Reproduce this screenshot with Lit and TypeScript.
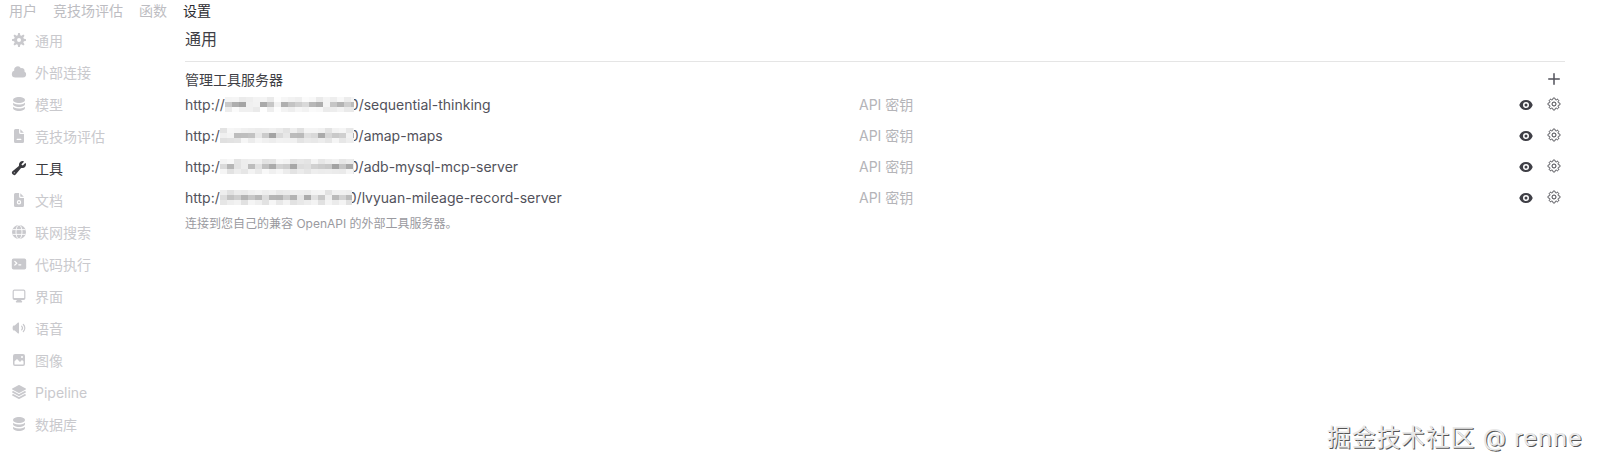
import { LitElement, html, css, svg } from "lit";
import { customElement } from "lit/decorators.js";

const db = svg`<path d="M8 7c3.314 0 6-1.343 6-3s-2.686-3-6-3-6 1.343-6 3 2.686 3 6 3Z"/><path d="M8 8.5c1.84 0 3.579-.37 4.914-1.037A6.33 6.33 0 0 0 14 6.78V8c0 1.657-2.686 3-6 3S2 9.657 2 8V6.78c.346.273.72.5 1.087.683C4.42 8.131 6.16 8.5 8 8.5Z"/><path d="M8 12.5c1.84 0 3.579-.37 4.914-1.037.366-.183.74-.41 1.086-.684V12c0 1.657-2.686 3-6 3s-6-1.343-6-3v-1.22c.346.273.72.5 1.087.683C4.42 12.131 6.16 12.5 8 12.5Z"/>`;

const icons: Record<string, { box: number; body: unknown }> = {
  gear: { box: 16, body: svg`<path fill-rule="evenodd" d="M6.955 1.45A.5.5 0 0 1 7.452 1h1.096a.5.5 0 0 1 .497.45l.17 1.699c.484.12.94.312 1.356.562l1.321-1.081a.5.5 0 0 1 .67.033l.774.775a.5.5 0 0 1 .034.67l-1.08 1.32c.25.417.44.873.561 1.357l1.699.17a.5.5 0 0 1 .45.497v1.096a.5.5 0 0 1-.45.497l-1.699.17c-.12.484-.312.94-.562 1.356l1.082 1.322a.5.5 0 0 1-.034.67l-.774.774a.5.5 0 0 1-.67.033l-1.322-1.08c-.416.25-.872.44-1.356.561l-.17 1.699a.5.5 0 0 1-.497.45H7.452a.5.5 0 0 1-.497-.45l-.17-1.699a4.973 4.973 0 0 1-1.356-.562L4.108 13.37a.5.5 0 0 1-.67-.033l-.774-.775a.5.5 0 0 1-.034-.67l1.08-1.32a4.971 4.971 0 0 1-.561-1.357l-1.699-.17A.5.5 0 0 1 1 8.548V7.452a.5.5 0 0 1 .45-.497l1.699-.17c.12-.484.312-.94.562-1.356L2.629 4.107a.5.5 0 0 1 .034-.67l.774-.774a.5.5 0 0 1 .67-.033L5.43 3.71a4.97 4.97 0 0 1 1.356-.561l.17-1.699ZM6 8a2 2 0 1 0 4 0 2 2 0 0 0-4 0Z"/>` },
  cloud: { box: 20, body: svg`<path d="M1 12.5A4.5 4.5 0 0 0 5.5 17H15a4 4 0 0 0 1.866-7.539 3.504 3.504 0 0 0-4.504-4.272A4.5 4.5 0 0 0 4.06 8.235 4.502 4.502 0 0 0 1 12.5Z"/>` },
  db: { box: 16, body: db },
  file: { box: 16, body: svg`<path fill-rule="evenodd" d="M3 2.5A1.5 1.5 0 0 1 4.5 1h3.6v3.4A1.6 1.6 0 0 0 9.7 6H13v7.5a1.5 1.5 0 0 1-1.5 1.5h-7A1.5 1.5 0 0 1 3 13.5v-11Zm3.2 8.3a.6.6 0 0 0 0 1.2h3.6a.6.6 0 0 0 0-1.2H6.2Z"/><path d="M9.3 1.2 12.8 4.8H9.8a.5.5 0 0 1-.5-.5V1.2Z"/>` },
  wrench: { box: 24, body: svg`<path fill-rule="evenodd" d="M12 6.75a5.25 5.25 0 0 1 6.775-5.025.75.75 0 0 1 .313 1.248l-3.32 3.319c.063.475.276.934.641 1.299.365.365.824.578 1.3.64l3.318-3.319a.75.75 0 0 1 1.248.313 5.25 5.25 0 0 1-5.472 6.756c-1.018-.086-1.87.1-2.309.634L7.344 21.3A3.298 3.298 0 1 1 2.7 16.657l8.684-7.151c.533-.44.72-1.291.634-2.309A5.342 5.342 0 0 1 12 6.75ZM4.117 19.125a.75.75 0 0 1 .75-.75h.008a.75.75 0 0 1 .75.75v.008a.75.75 0 0 1-.75.75h-.008a.75.75 0 0 1-.75-.75v-.008Z"/>` },
  doc: { box: 16, body: svg`<path fill-rule="evenodd" d="M3 2.5A1.5 1.5 0 0 1 4.5 1h3.6v3.4A1.6 1.6 0 0 0 9.7 6H13v7.5a1.5 1.5 0 0 1-1.5 1.5h-7A1.5 1.5 0 0 1 3 13.5v-11ZM8 8a2.2 2.2 0 1 0 0 4.4A2.2 2.2 0 0 0 8 8Zm0 1.2a1 1 0 1 1 0 2 1 1 0 0 1 0-2Z"/><path d="M9.3 1.2 12.8 4.8H9.8a.5.5 0 0 1-.5-.5V1.2Z"/>` },
  globe: { box: 16, body: svg`<circle cx="8" cy="8" r="7"/><g fill="none" stroke="#fff" stroke-width=".9"><ellipse cx="8" cy="8" rx="3" ry="7"/><path d="M1.5 5.6h13M1.5 10.4h13"/></g>` },
  term: { box: 20, body: svg`<path fill-rule="evenodd" d="M3.25 3A2.25 2.25 0 0 0 1 5.25v9.5A2.25 2.25 0 0 0 3.25 17h13.5A2.25 2.25 0 0 0 19 14.75v-9.5A2.25 2.25 0 0 0 16.75 3H3.25Zm.943 8.752a.75.75 0 0 1 .055-1.06L6.128 9l-1.88-1.693a.75.75 0 1 1 1.004-1.114l2.5 2.25a.75.75 0 0 1 0 1.114l-2.5 2.25a.75.75 0 0 1-1.06-.055ZM9.75 10.25a.75.75 0 0 0 0 1.5h2.5a.75.75 0 0 0 0-1.5h-2.5Z"/>` },
  desk: { box: 20, body: svg`<path fill-rule="evenodd" d="M2 4.25A2.25 2.25 0 0 1 4.25 2h11.5A2.25 2.25 0 0 1 18 4.25v8.5A2.25 2.25 0 0 1 15.75 15h-3.105a3.501 3.501 0 0 0 1.1 1.677A.75.75 0 0 1 13.26 18H6.74a.75.75 0 0 1-.484-1.323A3.501 3.501 0 0 0 7.355 15H4.25A2.25 2.25 0 0 1 2 12.75v-8.5Zm1.5 0a.75.75 0 0 1 .75-.75h11.5a.75.75 0 0 1 .75.75v7.5a.75.75 0 0 1-.75.75H4.25a.75.75 0 0 1-.75-.75v-7.5Z"/>` },
  sound: { box: 20, body: svg`<path d="M10 3.75a.75.75 0 0 0-1.264-.546L4.703 7H3.167a.75.75 0 0 0-.7.48A6.985 6.985 0 0 0 2 10c0 .887.165 1.737.468 2.52.111.29.39.48.7.48h1.535l4.033 3.796A.75.75 0 0 0 10 16.25V3.75ZM15.95 5.05a.75.75 0 0 0-1.06 1.061 5.5 5.5 0 0 1 0 7.778.75.75 0 0 0 1.06 1.06 7 7 0 0 0 0-9.899Z"/><path d="M13.829 7.172a.75.75 0 0 0-1.061 1.06 2.5 2.5 0 0 1 0 3.536.75.75 0 0 0 1.06 1.06 4 4 0 0 0 0-5.656Z"/>` },
  image: { box: 16, body: svg`<path fill-rule="evenodd" d="M2 4a2 2 0 0 1 2-2h8a2 2 0 0 1 2 2v8a2 2 0 0 1-2 2H4a2 2 0 0 1-2-2V4Zm10.5 5.707a.5.5 0 0 0-.146-.353l-1-1a.5.5 0 0 0-.708 0L9.354 9.646a.5.5 0 0 1-.708 0L6.354 7.354a.5.5 0 0 0-.708 0l-2 2a.5.5 0 0 0-.146.353V12a.5.5 0 0 0 .5.5h8a.5.5 0 0 0 .5-.5V9.707ZM12 5a1 1 0 1 1-2 0 1 1 0 0 1 2 0Z"/>` },
  layers: { box: 24, body: svg`<path d="M11.644 1.59a.75.75 0 0 1 .712 0l9.75 5.25a.75.75 0 0 1 0 1.32l-9.75 5.25a.75.75 0 0 1-.712 0l-9.75-5.25a.75.75 0 0 1 0-1.32l9.75-5.25Z"/><path d="m3.265 10.602 7.668 4.129a2.25 2.25 0 0 0 2.134 0l7.668-4.13 1.37.739a.75.75 0 0 1 0 1.32l-9.75 5.25a.75.75 0 0 1-.71 0l-9.75-5.25a.75.75 0 0 1 0-1.32l1.37-.738Z"/><path d="m10.933 19.231-7.668-4.13-1.37.739a.75.75 0 0 0 0 1.32l9.75 5.25c.221.12.489.12.71 0l9.75-5.25a.75.75 0 0 0 0-1.32l-1.37-.738-7.668 4.13a2.25 2.25 0 0 1-2.134-.001Z"/>` },
};

const nav = [
  ["gear", "通用"], ["cloud", "外部连接"], ["db", "模型"], ["file", "竞技场评估"],
  ["wrench", "工具"], ["doc", "文档"], ["globe", "联网搜索"], ["term", "代码执行"],
  ["desk", "界面"], ["sound", "语音"], ["image", "图像"], ["layers", "Pipeline"], ["db", "数据库"],
];

const servers = [
  { pre: "http://", path: "0/sequential-thinking", w: 129, seed: 7, halo: false },
  { pre: "http:/", path: "0/amap-maps", w: 134, seed: 23, halo: true },
  { pre: "http:/", path: "0/adb-mysql-mcp-server", w: 134, seed: 41, halo: true },
  { pre: "http:/", path: "0/lvyuan-mileage-record-server", w: 132, seed: 59, halo: true },
];

function mosaic(w: number, seed: number, halo: boolean) {
  const cw = 7;
  const ch = 5;
  const rows = 3;
  const cols = Math.ceil(w / cw);
  const cells = [];
  let s = seed;
  for (let r = 0; r < rows; r++) {
    for (let c = 0; c < cols; c++) {
      s = (s * 9301 + 49297) % 233280;
      const v = s / 233280;
      const grey = r === 1
        ? Math.round(160 + v * 85)
        : Math.round((halo ? 224 : 232) + v * 24);
      cells.push(svg`<rect x=${c * cw} y=${r * ch} width=${cw} height=${ch} fill="rgb(${grey},${grey},${grey})"/>`);
    }
  }
  return html`<svg class="mosaic" width=${w} height="15" viewBox="0 0 ${w} 15">${cells}</svg>`;
}

@customElement("nav-icon")
class NavIcon extends LitElement {
  static properties = { name: {} };
  name = "gear";
  static styles = css`
    :host { display: flex; width: 16px; height: 16px; }
    svg { width: 16px; height: 16px; fill: currentColor; }
  `;
  render() {
    const i = icons[this.name];
    return html`<svg viewBox="0 0 ${i.box} ${i.box}">${i.body}</svg>`;
  }
}

@customElement("app-root")
export class AppRoot extends LitElement {
  static styles = css`
    :host {
      display: block;
      position: relative;
      width: 1598px;
      height: 468px;
      overflow: hidden;
      background: #fff;
      font-family: Inter, "Noto Sans CJK SC", sans-serif;
      font-size: 14px;
      color: #3f3f46;
    }
    .tabs {
      display: flex;
      gap: 16px;
      height: 22px;
      padding-left: 9px;
      align-items: center;
      color: #bdbdc2;
      line-height: 22px;
    }
    .tabs .on { color: #2b2b2f; }
    .body { display: flex; }
    .side {
      width: 185px;
      flex: none;
      padding-top: 2px;
    }
    .item {
      display: flex;
      align-items: center;
      gap: 8px;
      height: 32px;
      padding-left: 11px;
      color: #c9c9cd;
    }
    .item.on { color: #3a3a3f; }
    .main { width: 1380px; }
    h1 {
      margin: 0;
      height: 40px;
      padding-top: 5px;
      box-sizing: border-box;
      font-size: 16px;
      font-weight: 400;
      line-height: 24px;
      color: #3f3f46;
      border-bottom: 1px solid #e5e5e5;
    }
    .head {
      display: flex;
      align-items: flex-start;
      justify-content: space-between;
      height: 27px;
      padding-top: 9px;
      box-sizing: border-box;
      line-height: 17px;
      color: #3f3f46;
    }
    .plus { width: 16px; height: 16px; margin-right: 3px; color: #52525b; }
    .row {
      display: flex;
      align-items: center;
      height: 31px;
      color: #52525b;
    }
    .url { width: 674px; display: flex; align-items: center; white-space: nowrap; }
    .mosaic {
      display: block;
      flex: none;
      position: relative;
      margin-right: -4px;
      filter: blur(0.6px);
    }
    .key { flex: 1; color: #b4b4b8; margin-bottom: 2px; }
    .eye { width: 16px; height: 16px; fill: #3f3f46; margin: 1px 12px 0 0; }
    .cog {
      width: 16px; height: 16px; margin: 0 3px 2px 0;
      fill: none; stroke: #3f3f46; stroke-width: 1.5;
    }
    .note {
      margin-top: 2px;
      font-size: 12px;
      line-height: 18px;
      color: #9a9aa0;
    }
    .mark {
      position: absolute;
      left: 1327px;
      top: 423px;
      font-size: 24px;
      line-height: 30px;
      color: #e8e8e8;
      letter-spacing: 0.7px;
      white-space: nowrap;
      text-shadow: 1px 1px 0 #555, -1px -1px 0 #fff;
    }
  `;

  render() {
    return html`
      <div class="tabs">
        <span>用户</span><span>竞技场评估</span><span>函数</span><span class="on">设置</span>
      </div>
      <div class="body">
        <div class="side">
          ${nav.map(([icon, label], i) => html`
            <div class="item ${i === 4 ? "on" : ""}">
              <nav-icon .name=${icon}></nav-icon><span>${label}</span>
            </div>`)}
        </div>
        <div class="main">
          <h1>通用</h1>
          <div class="head">
            <span>管理工具服务器</span>
            <svg class="plus" viewBox="0 0 16 16" fill="currentColor"><path d="M8.75 2.75a.75.75 0 0 0-1.5 0v4.5h-4.5a.75.75 0 0 0 0 1.5h4.5v4.5a.75.75 0 0 0 1.5 0v-4.5h4.5a.75.75 0 0 0 0-1.5h-4.5v-4.5Z"/></svg>
          </div>
          ${servers.map((s) => html`
            <div class="row">
              <div class="url"><span>${s.pre}</span>${mosaic(s.w, s.seed, s.halo)}<span>${s.path}</span></div>
              <div class="key">API 密钥</div>
              <svg class="eye" viewBox="0 0 16 16"><path d="M8 9.5a1.5 1.5 0 1 0 0-3 1.5 1.5 0 0 0 0 3Z"/><path fill-rule="evenodd" d="M1.38 8.28a.87.87 0 0 1 0-.566 7.003 7.003 0 0 1 13.238.006.87.87 0 0 1 0 .566A7.003 7.003 0 0 1 1.379 8.28ZM11 8a3 3 0 1 1-6 0 3 3 0 0 1 6 0Z"/></svg>
              <svg class="cog" viewBox="0 0 24 24"><path d="M10.343 3.94c.09-.542.56-.94 1.11-.94h1.093c.55 0 1.02.398 1.11.94l.149.894c.07.424.384.764.78.93.398.164.855.142 1.205-.108l.737-.527a1.125 1.125 0 0 1 1.45.12l.773.774c.39.389.44 1.002.12 1.45l-.527.737c-.25.35-.272.806-.107 1.204.165.397.505.71.93.78l.893.15c.543.09.94.559.94 1.109v1.094c0 .55-.397 1.02-.94 1.11l-.894.149c-.424.07-.764.383-.929.78-.165.398-.143.854.107 1.204l.527.738c.32.447.269 1.06-.12 1.45l-.774.773a1.125 1.125 0 0 1-1.449.12l-.738-.527c-.35-.25-.806-.272-1.203-.107-.398.165-.71.505-.781.929l-.149.894c-.09.542-.56.94-1.11.94h-1.094c-.55 0-1.019-.398-1.11-.94l-.148-.894c-.071-.424-.384-.764-.781-.93-.398-.164-.854-.142-1.204.108l-.738.527c-.447.32-1.06.269-1.45-.12l-.773-.774a1.125 1.125 0 0 1-.12-1.45l.527-.737c.25-.35.272-.806.108-1.204-.165-.397-.506-.71-.93-.78l-.894-.15c-.542-.09-.94-.56-.94-1.109v-1.094c0-.55.398-1.02.94-1.11l.894-.149c.424-.07.765-.383.93-.78.165-.398.143-.854-.108-1.204l-.526-.738a1.125 1.125 0 0 1 .12-1.45l.773-.773a1.125 1.125 0 0 1 1.45-.12l.737.527c.35.25.807.272 1.204.107.397-.165.71-.505.78-.929l.15-.894Z"/><path d="M15 12a3 3 0 1 1-6 0 3 3 0 0 1 6 0Z"/></svg>
            </div>`)}
          <div class="note">连接到您自己的兼容 OpenAPI 的外部工具服务器。</div>
        </div>
      </div>
      <div class="mark">掘金技术社区 @ renne</div>
    `;
  }
}
